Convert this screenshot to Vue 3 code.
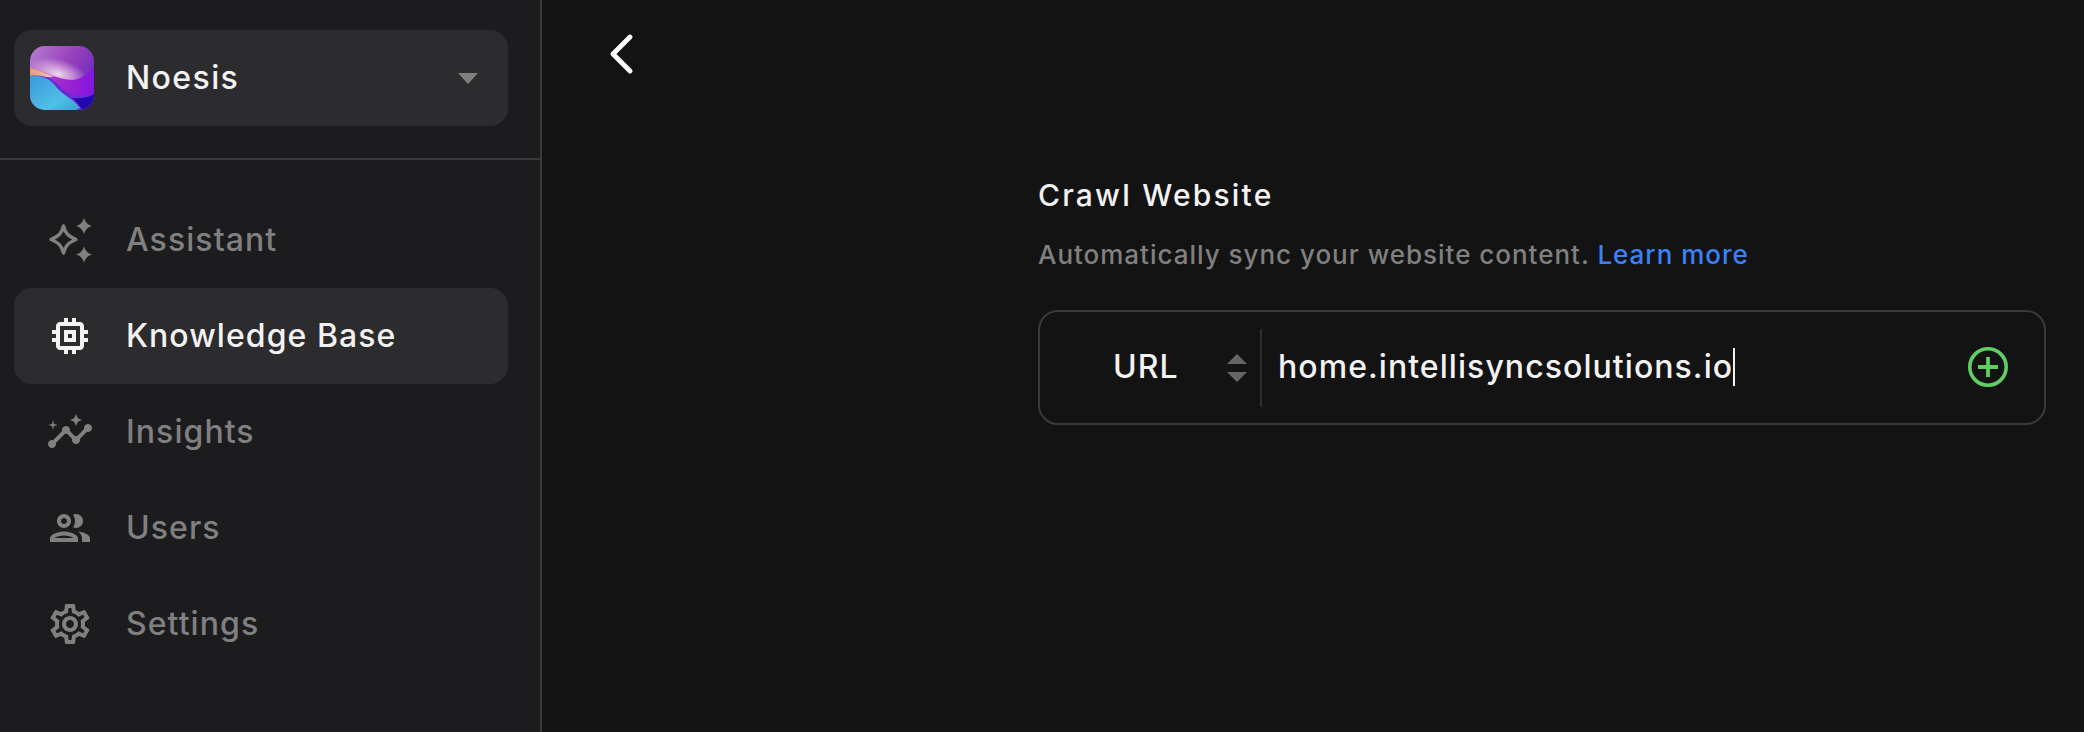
<template>
  <div class="page">
    <aside class="sidebar">
      <div class="sidebar-head">
        <div class="workspace">
          <svg class="logo" viewBox="0 0 64 64">
            <defs>
              <clipPath id="logoClip"><rect width="64" height="64" rx="15" /></clipPath>
              <linearGradient id="logoSky" x1="0" y1="0" x2="1" y2="0.6">
                <stop offset="0" stop-color="#b57fd0" />
                <stop offset="0.5" stop-color="#9c45bd" />
                <stop offset="1" stop-color="#6a28bc" />
              </linearGradient>
              <radialGradient id="logoGlow">
                <stop offset="0" stop-color="#f3e2f0" stop-opacity="0.95" />
                <stop offset="0.5" stop-color="#ecc8ea" stop-opacity="0.55" />
                <stop offset="1" stop-color="#e0b8e6" stop-opacity="0" />
              </radialGradient>
              <linearGradient id="logoWater" x1="0" y1="0" x2="1" y2="1">
                <stop offset="0" stop-color="#3a98dc" />
                <stop offset="0.65" stop-color="#50bfe6" />
                <stop offset="1" stop-color="#3aa0d0" />
              </linearGradient>
              <linearGradient id="logoBand" x1="0" y1="0" x2="1" y2="0">
                <stop offset="0" stop-color="#e99c6c" />
                <stop offset="1" stop-color="#eec8c8" />
              </linearGradient>
              <linearGradient id="logoFold" x1="0" y1="0" x2="1" y2="0">
                <stop offset="0" stop-color="#b250c8" />
                <stop offset="0.6" stop-color="#9a22d2" />
                <stop offset="1" stop-color="#8414e0" />
              </linearGradient>
            </defs>
            <g clip-path="url(#logoClip)">
              <rect width="64" height="64" fill="url(#logoSky)" />
              <ellipse cx="28" cy="28" rx="32" ry="15" transform="rotate(15 28 28)" fill="url(#logoGlow)" />
              <path d="M0 22 C14 25 28 34 42 34 C52 33 60 27 64 20 L64 64 L0 64Z" fill="url(#logoFold)" />
              <path d="M0 22 C8 24 16 27 24 31 L0 31Z" fill="url(#logoBand)" />
              <path d="M0 30 C16 28 24 34 32 42 C40 50 50 52 64 48 L64 64 L0 64Z" fill="#6a2ad8" />
              <path d="M0 30 C14 29 21 34 27 42 C34 50 44 53 50 62 L46 64 L0 64Z" fill="url(#logoWater)" />
              <path d="M42 52 C50 53 58 52 64 48 L64 64 L52 64 C50 60 46 55 42 52Z" fill="#2208b0" />
            </g>
          </svg>
          <span class="workspace-name">Noesis</span>
          <span class="caret-down"></span>
        </div>
      </div>
      <nav class="nav">
        <a v-for="item in navItems" :key="item.label" class="nav-item" :class="{ active: item.active }">
          <svg class="nav-icon" viewBox="0 0 24 24" fill="currentColor">
            <path v-for="d in item.paths" :key="d" :d="d" />
            <path
              v-if="item.outline"
              :d="item.outline"
              fill="none"
              stroke="currentColor"
              stroke-width="1.7"
              stroke-linejoin="round"
            />
          </svg>
          <span>{{ item.label }}</span>
        </a>
      </nav>
    </aside>

    <main class="content">
      <button class="back" aria-label="Back">
        <svg viewBox="0 0 26 40" width="26" height="40">
          <path d="M22 3 L5 20 L22 37" fill="none" stroke="#fff" stroke-width="4.8" stroke-linecap="round" stroke-linejoin="round" />
        </svg>
      </button>

      <section class="crawl">
        <h2>Crawl Website</h2>
        <p>Automatically sync your website content. <a class="learn">Learn more</a></p>

        <div class="url-box">
          <div class="scheme">
            <span class="scheme-label">URL</span>
            <span class="stepper"><i class="up"></i><i class="down"></i></span>
          </div>
          <div class="url-value">
            <span>{{ url }}</span><span class="text-caret"></span>
          </div>
          <svg class="add" viewBox="0 0 40 40" width="40" height="40">
            <circle cx="20" cy="20" r="18.2" fill="none" stroke="#5fcf65" stroke-width="3.6" />
            <path d="M20 10 V30 M10 20 H30" stroke="#5fcf65" stroke-width="3.8" />
          </svg>
        </div>
      </section>
    </main>
  </div>
</template>

<script setup>
const url = 'home.intellisyncsolutions.io'

const navItems = [
  {
    label: 'Assistant',
    outline: 'M8.75 5 C9.7 8.4 10.6 9.9 15 11.75 C10.6 13.6 9.7 15.1 8.75 18.5 C7.8 15.1 6.9 13.6 2.5 11.75 C6.9 9.9 7.8 8.4 8.75 5Z',
    paths: [
      'M19 1 C19.8 3.2 20.6 4.2 23 5 C20.6 5.8 19.8 6.8 19 9 C18.2 6.8 17.4 5.8 15 5 C17.4 4.2 18.2 3.2 19 1Z',
      'M19 15.3 C19.8 17.5 20.6 18.5 23 19.3 C20.6 20.1 19.8 21.1 19 23.3 C18.2 21.1 17.4 20.1 15 19.3 C17.4 18.5 18.2 17.5 19 15.3Z'
    ]
  },
  {
    label: 'Knowledge Base',
    active: true,
    paths: [
      'M15 9H9v6h6V9zm-2 4h-2v-2h2v2zm8-2V9h-2V7c0-1.1-.9-2-2-2h-2V3h-2v2h-2V3H9v2H7c-1.1 0-2 .9-2 2v2H3v2h2v2H3v2h2v2c0 1.1.9 2 2 2h2v2h2v-2h2v2h2v-2h2c1.1 0 2-.9 2-2v-2h2v-2h-2v-2h2zm-4 6H7V7h10v10z'
    ]
  },
  {
    label: 'Insights',
    paths: [
      'M21 8c-1.45 0-2.26 1.44-1.93 2.51l-3.55 3.56c-.3-.09-.74-.09-1.04 0l-2.55-2.55C12.27 10.45 11.46 9 10 9c-1.45 0-2.27 1.44-1.93 2.52l-4.56 4.55C2.44 15.74 1 16.55 1 18c0 1.1.9 2 2 2 1.45 0 2.26-1.44 1.93-2.51l4.55-4.56c.3.09.74.09 1.04 0l2.55 2.55C12.73 16.55 13.54 18 15 18c1.45 0 2.27-1.44 1.93-2.52l3.56-3.55c1.07.33 2.51-.48 2.51-1.93 0-1.1-.9-2-2-2z',
      'M15 9l.94-2.07L18 6l-2.06-.93L15 3l-.92 2.07L12 6l2.08.93z',
      'M3.5 11L4 9l2-.5L4 8l-.5-2L3 8l-2 .5L3 9z'
    ]
  },
  {
    label: 'Users',
    paths: [
      'M9 13.75c-2.34 0-7 1.17-7 3.5V19h14v-1.75c0-2.33-4.66-3.5-7-3.5zM4.34 17c.84-.58 2.87-1.25 4.66-1.25s3.82.67 4.66 1.25H4.34zM9 12c1.93 0 3.5-1.57 3.5-3.5S10.93 5 9 5 5.5 6.57 5.5 8.5 7.07 12 9 12zm0-5c.83 0 1.5.67 1.5 1.5S9.83 10 9 10s-1.5-.67-1.5-1.5S8.17 7 9 7zm7.04 6.81c1.16.84 1.96 1.96 1.96 3.44V19h4v-1.75c0-2.02-3.5-3.17-5.96-3.44zM15 12c1.93 0 3.5-1.57 3.5-3.5S16.93 5 15 5c-.54 0-1.04.13-1.5.35.63.89 1 1.98 1 3.15s-.37 2.26-1 3.15c.46.22.96.35 1.5.35z'
    ]
  },
  {
    label: 'Settings',
    paths: [
      'M19.43 12.98c.04-.32.07-.64.07-.98 0-.34-.03-.66-.07-.98l2.11-1.65c.19-.15.24-.42.12-.64l-2-3.46c-.09-.16-.26-.25-.44-.25-.06 0-.12.01-.17.03l-2.49 1c-.52-.4-1.08-.73-1.69-.98l-.38-2.65C14.46 2.18 14.25 2 14 2h-4c-.25 0-.46.18-.49.42l-.38 2.65c-.61.25-1.17.59-1.69.98l-2.49-1c-.06-.02-.12-.03-.18-.03-.17 0-.34.09-.43.25l-2 3.46c-.13.22-.07.49.12.64l2.11 1.65c-.04.32-.07.65-.07.98 0 .33.03.66.07.98l-2.11 1.65c-.19.15-.24.42-.12.64l2 3.46c.09.16.26.25.44.25.06 0 .12-.01.17-.03l2.49-1c.52.4 1.08.73 1.69.98l.38 2.65c.03.24.24.42.49.42h4c.25 0 .46-.18.49-.42l.38-2.65c.61-.25 1.17-.59 1.69-.98l2.49 1c.06.02.12.03.18.03.17 0 .34-.09.43-.25l2-3.46c.12-.22.07-.49-.12-.64l-2.11-1.65zm-1.98-1.71c.04.31.05.52.05.73 0 .21-.02.43-.05.73l-.14 1.13.89.7 1.08.84-.7 1.21-1.27-.51-1.04-.42-.9.68c-.43.32-.84.56-1.25.73l-1.06.43-.16 1.13-.2 1.35h-1.4l-.19-1.35-.16-1.13-1.06-.43c-.43-.18-.83-.41-1.23-.71l-.91-.7-1.06.43-1.27.51-.7-1.21 1.08-.84.89-.7-.14-1.13c-.03-.31-.05-.54-.05-.74s.02-.43.05-.73l.14-1.13-.89-.7-1.08-.84.7-1.21 1.27.51 1.04.42.9-.68c.43-.32.84-.56 1.25-.73l1.06-.43.16-1.13.2-1.35h1.39l.19 1.35.16 1.13 1.06.43c.43.18.83.41 1.23.71l.91.7 1.06-.43 1.27-.51.7 1.21-1.07.85-.89.7.14 1.13zM12 8c-2.21 0-4 1.79-4 4s1.79 4 4 4 4-1.79 4-4-1.79-4-4-4zm0 6c-1.1 0-2-.9-2-2s.9-2 2-2 2 .9 2 2-.9 2-2 2z'
    ]
  }
]
</script>

<style>
html, body {
  margin: 0;
  background: #131313;
}
</style>

<style scoped>
.page {
  display: flex;
  height: 732px;
  overflow: hidden;
  font-family: Inter, "Liberation Sans", sans-serif;
  background: #131313;
}

/* sidebar */
.sidebar {
  width: 540px;
  flex-shrink: 0;
  background: #1c1c1e;
  border-right: 2px solid #3a3a3c;
}
.sidebar-head {
  padding: 30px 32px 32px 14px;
  border-bottom: 2px solid #3a3a3c;
}
.workspace {
  display: flex;
  align-items: center;
  height: 96px;
  padding: 0 30px 0 16px;
  box-sizing: border-box;
  border-radius: 18px;
  background: #2c2c2e;
}
.logo {
  width: 64px;
  height: 64px;
  flex-shrink: 0;
}
.workspace-name {
  margin-left: 32px;
  flex: 1;
  margin-top: -2px;
  font-size: 32px;
  font-weight: 500;
  letter-spacing: 1.4px;
  color: #f2f2f2;
}
.caret-down {
  width: 0;
  height: 0;
  border-left: 10.5px solid transparent;
  border-right: 10.5px solid transparent;
  border-top: 11px solid #808080;
}
.nav {
  display: flex;
  flex-direction: column;
  padding: 32px 32px 0 14px;
}
.nav-item {
  display: flex;
  align-items: center;
  height: 96px;
  padding-left: 32px;
  border-radius: 18px;
  font-size: 32px;
  font-weight: 450;
  letter-spacing: 1.06px;
  color: #808080;
}
.nav-item span {
  margin-top: -2px;
}
.nav-item.active {
  background: #2c2c2e;
  color: #f2f2f2;
}
.nav-icon {
  width: 48px;
  height: 48px;
  margin-right: 32px;
  flex-shrink: 0;
}

/* main */
.content {
  flex: 1;
  min-width: 0;
  padding: 34px 38px 0 66px;
  box-sizing: border-box;
}
.back {
  display: block;
  width: 26px;
  height: 40px;
  padding: 0;
  border: 0;
  background: none;
}
.crawl {
  margin: 0 0 0 430px;
}
.crawl h2 {
  margin: 101px 0 0;
  font-size: 30px;
  line-height: 40px;
  font-weight: 450;
  letter-spacing: 2.2px;
  color: #f2f2f2;
}
.crawl p {
  margin: 22px 0 0;
  font-size: 26px;
  line-height: 36px;
  font-weight: 450;
  letter-spacing: 0.98px;
  color: #808080;
}
.learn {
  color: #3b82f6;
}
.url-box {
  display: flex;
  align-items: center;
  height: 115px;
  margin-top: 37px;
  padding-right: 36px;
  box-sizing: border-box;
  border: 2px solid #3a3a3c;
  border-radius: 20px;
}
.scheme {
  display: flex;
  align-items: center;
  align-self: center;
  width: 222px;
  height: 78px;
  padding-left: 73px;
  box-sizing: border-box;
  border-right: 2px solid #2e2e30;
}
.scheme-label {
  flex: 1;
  margin-top: -2px;
  font-size: 32px;
  font-weight: 450;
  letter-spacing: 1px;
  color: #f2f2f2;
}
.stepper {
  display: flex;
  flex-direction: column;
  gap: 8px;
  margin-right: 13px;
}
.stepper i {
  width: 0;
  height: 0;
  border-left: 10px solid transparent;
  border-right: 10px solid transparent;
}
.stepper .up {
  border-bottom: 10px solid #666;
}
.stepper .down {
  border-top: 10px solid #666;
}
.url-value {
  flex: 1;
  display: flex;
  align-items: center;
  margin-top: -2px;
  padding-left: 16px;
  font-size: 32px;
  font-weight: 450;
  letter-spacing: 1.06px;
  color: #f2f2f2;
}
.text-caret {
  width: 2px;
  height: 38px;
  background: #f2f2f2;
}
.add {
  flex-shrink: 0;
  margin-top: -2px;
}
</style>
